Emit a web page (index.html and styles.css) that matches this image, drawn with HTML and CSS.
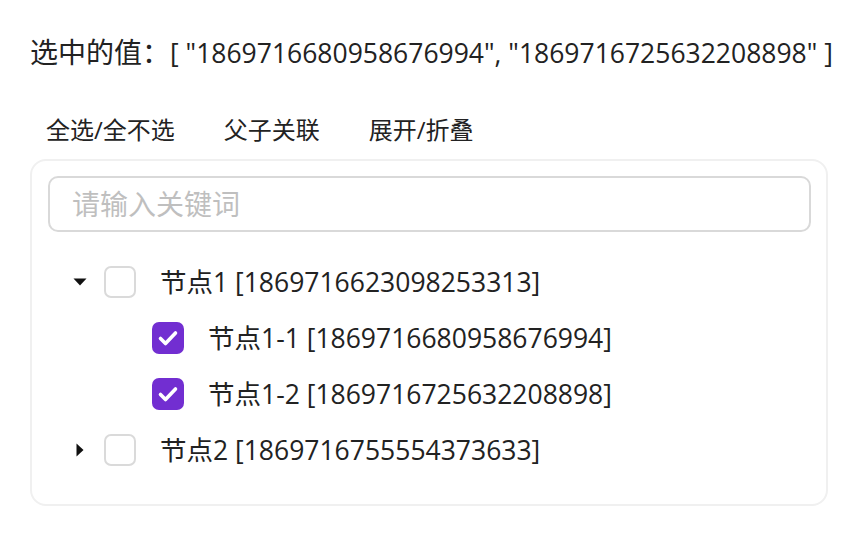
FILE: index.html
```html
<!DOCTYPE html>
<html lang="zh-CN">
<head>
<meta charset="utf-8">
<title>Tree</title>
<link rel="stylesheet" href="styles.css">
</head>
<body>
<div class="page">
  <div class="title"><span class="label">选中的值：</span><span class="value">[ "1869716680958676994", "1869716725632208898" ]</span></div>
  <div class="toolbar">
    <button class="tbtn">全选/全不选</button>
    <button class="tbtn">父子关联</button>
    <button class="tbtn">展开/折叠</button>
  </div>
  <div class="card">
    <input class="search" type="text" placeholder="请输入关键词">
    <div class="tree">
      <div class="row">
        <span class="arrow"><svg width="14" height="8" viewBox="0 0 14 8"><path d="M0.5 0.5 H13.5 L7 7.5 Z" fill="#111"/></svg></span>
        <span class="cb"></span>
        <span class="label-text">节点1 [1869716623098253313]</span>
      </div>
      <div class="row child">
        <span class="arrow"></span>
        <span class="cb checked"><svg width="32" height="32" viewBox="0 0 32 32"><path d="M8.5 16.5 L13.5 21.5 L23.5 11" fill="none" stroke="#fff" stroke-width="3.6" stroke-linecap="round" stroke-linejoin="round"/></svg></span>
        <span class="label-text">节点1-1 [1869716680958676994]</span>
      </div>
      <div class="row child">
        <span class="arrow"></span>
        <span class="cb checked"><svg width="32" height="32" viewBox="0 0 32 32"><path d="M8.5 16.5 L13.5 21.5 L23.5 11" fill="none" stroke="#fff" stroke-width="3.6" stroke-linecap="round" stroke-linejoin="round"/></svg></span>
        <span class="label-text">节点1-2 [1869716725632208898]</span>
      </div>
      <div class="row">
        <span class="arrow"><svg width="8" height="14" viewBox="0 0 8 14"><path d="M0.5 0.5 V13.5 L7.5 7 Z" fill="#111"/></svg></span>
        <span class="cb"></span>
        <span class="label-text">节点2 [1869716755554373633]</span>
      </div>
    </div>
  </div>
</div>
</body>
</html>
```

FILE: styles.css
```css
html, body {
  margin: 0;
  padding: 0;
  background: #fff;
}
body {
  font-family: "Open Sans", "Noto Sans CJK SC", sans-serif;
  color: #222;
}
.page {
  padding: 30px 33px 0 30px;
}
.title {
  height: 44px;
  line-height: 44px;
  white-space: nowrap;
}
.title .label {
  font-size: 28px;
}
.title .value {
  font-size: 26.5px;
}
.toolbar {
  display: flex;
  gap: 17px;
  margin-top: 36px;
  height: 40px;
}
.tbtn {
  font-family: inherit;
  font-size: 24px;
  color: #222;
  background: none;
  border: none;
  padding: 0 16px;
  line-height: 40px;
  height: 40px;
  cursor: pointer;
}
.card {
  margin-top: 9px;
  border: 2px solid #f0f0f0;
  border-radius: 16px;
  padding: 15px 15px 16px 16px;
}
.search {
  display: block;
  box-sizing: border-box;
  width: 100%;
  height: 56px;
  border: 2px solid #d9d9d9;
  border-radius: 10px;
  padding: 0 22px;
  font-family: inherit;
  font-size: 28px;
  color: #222;
  outline: none;
}
.search::placeholder {
  color: #bfbfbf;
}
.tree {
  margin-top: 22px;
  padding-bottom: 10px;
}
.row {
  display: flex;
  align-items: center;
  height: 56px;
  padding-left: 16px;
}
.row.child {
  padding-left: 64px;
}
.arrow {
  width: 32px;
  height: 32px;
  display: flex;
  align-items: center;
  justify-content: center;
  flex: none;
}
.cb {
  box-sizing: border-box;
  width: 32px;
  height: 32px;
  margin-left: 8px;
  border: 2px solid #dadada;
  border-radius: 7px;
  background: #fff;
  flex: none;
  display: flex;
}
.cb.checked {
  border: none;
  background: #722ed1;
}
.label-text {
  margin-left: 24px;
  padding-bottom: 4px;
  font-size: 26.5px;
  white-space: nowrap;
}
```
